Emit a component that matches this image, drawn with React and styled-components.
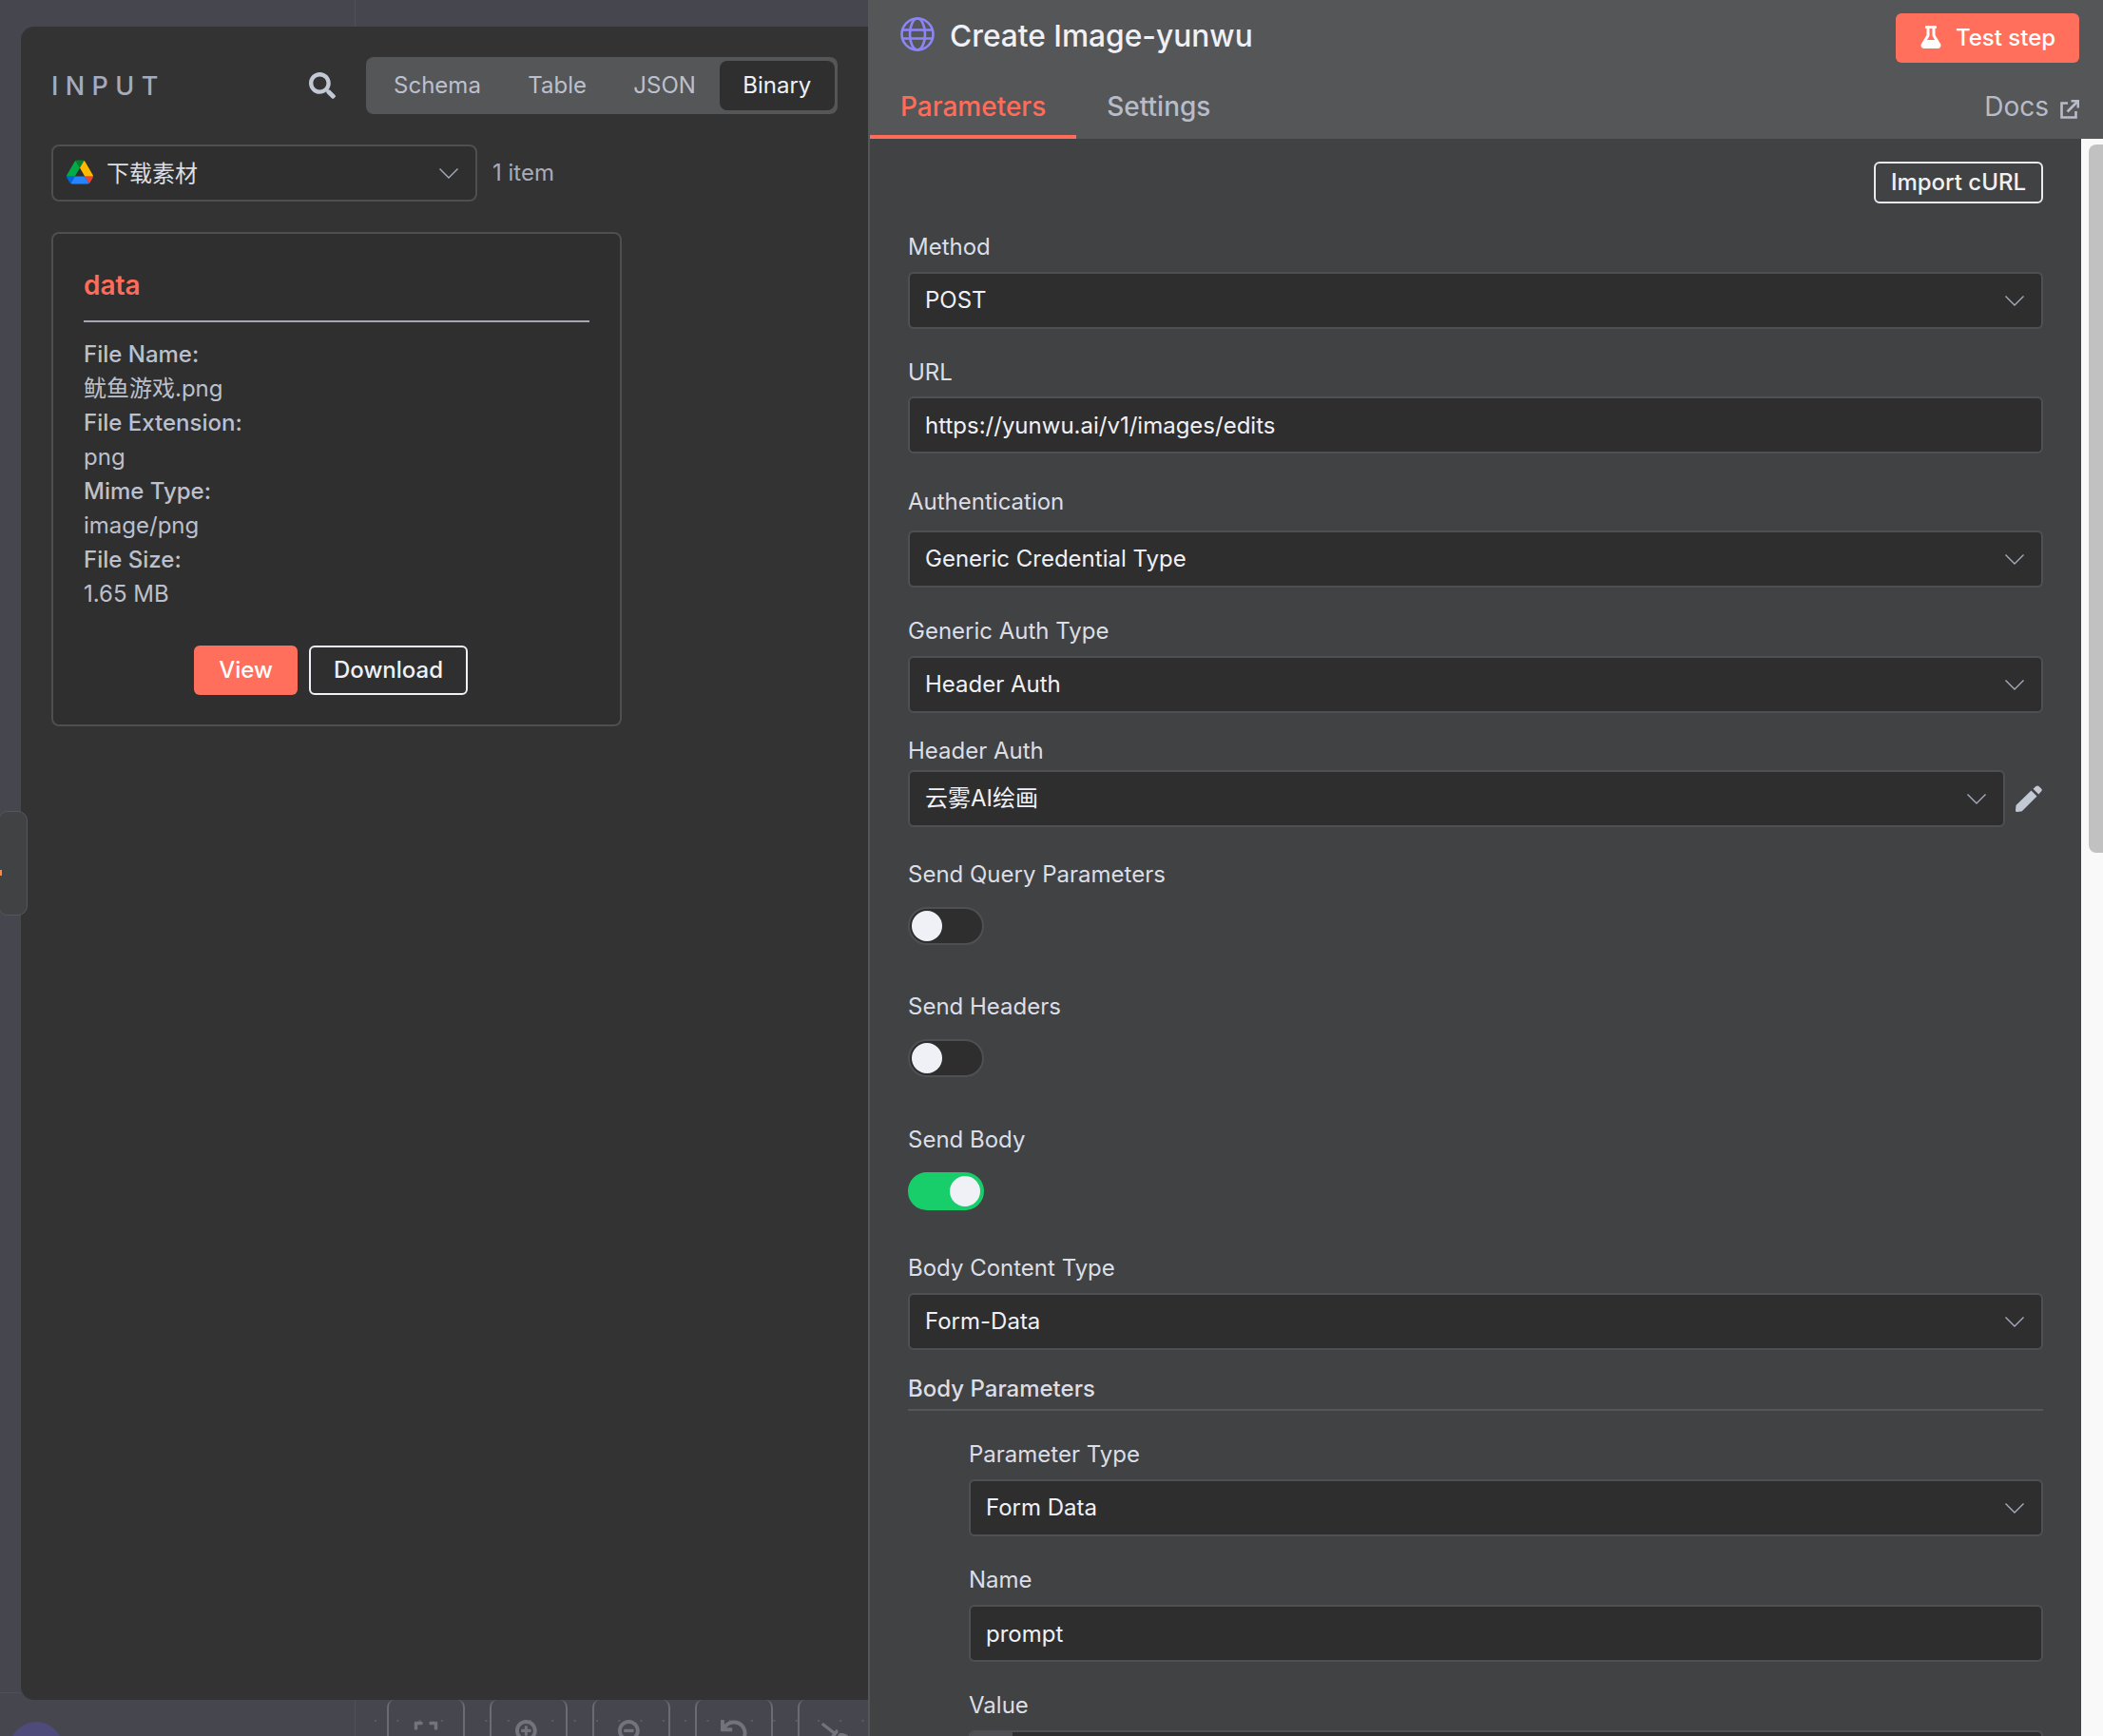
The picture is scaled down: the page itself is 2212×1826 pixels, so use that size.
import styled, { createGlobalStyle } from "styled-components";
import {
  FaSearch,
  FaFlask,
  FaExpand,
  FaSearchPlus,
  FaSearchMinus,
  FaUndo,
  FaBroom,
} from "react-icons/fa";

const GlobalStyle = createGlobalStyle`
  html, body {
    margin: 0;
    padding: 0;
    background: #46464f;
  }
  * {
    box-sizing: border-box;
  }
  body {
    font-family: Inter, "Noto Sans CJK SC", sans-serif;
  }
`;

const Chevron = () => (
  <ChevronSvg viewBox="0 0 20 11">
    <polyline points="0.5,0.5 10,10 19.5,0.5" />
  </ChevronSvg>
);

const Globe = () => (
  <GlobeSvg viewBox="0 0 36 36">
    <circle cx="18" cy="18" r="16.5" />
    <ellipse cx="18" cy="18" rx="8" ry="16.5" />
    <line x1="3" y1="13.5" x2="33" y2="13.5" />
    <line x1="3" y1="22.5" x2="33" y2="22.5" />
  </GlobeSvg>
);

const DriveLogo = () => (
  <DriveSvg viewBox="0 0 87.3 78">
    <path d="m6.6 66.85 3.85 6.65c.8 1.4 1.95 2.5 3.3 3.3l13.75-23.8h-27.5c0 1.55.4 3.1 1.2 4.5z" fill="#0066da" />
    <path d="m43.65 25-13.75-23.8c-1.35.8-2.5 1.9-3.3 3.3l-25.4 44a9.06 9.06 0 0 0 -1.2 4.5h27.5z" fill="#00ac47" />
    <path d="m73.55 76.8c1.35-.8 2.5-1.9 3.3-3.3l1.6-2.75 7.65-13.25c.8-1.4 1.2-2.95 1.2-4.5h-27.502l5.852 11.5z" fill="#ea4335" />
    <path d="m43.65 25 13.75-23.8c-1.35-.8-2.9-1.2-4.5-1.2h-18.5c-1.6 0-3.15.45-4.5 1.2z" fill="#00832d" />
    <path d="m59.8 53h-32.3l-13.75 23.8c1.35.8 2.9 1.2 4.5 1.2h50.8c1.6 0 3.15-.45 4.5-1.2z" fill="#2684fc" />
    <path d="m73.4 26.5-12.7-22c-.8-1.4-1.95-2.5-3.3-3.3l-13.75 23.8 16.15 28h27.45c0-1.55-.4-3.1-1.2-4.5z" fill="#ffba00" />
  </DriveSvg>
);

const ExternalLink = () => (
  <ExternalSvg viewBox="0 0 20 20">
    <path d="M8 3.5H1.5V18.5H16.5V12" />
    <path d="M7.5 12.5L18 2" />
    <path d="M11.5 1.2H18.8V8.5" />
  </ExternalSvg>
);

const Pencil = () => (
  <PencilSvg viewBox="0 0 28 28">
    <path d="M0.5 21L16.5 5.5L22.5 11.5L7 27Q6.5 27.6 5.5 27.6L1.5 28Q0 28 0 26.5Z" />
    <path d="M18.5 3.8L21.5 1Q23 -0.2 24.5 1L27.3 3.7Q28.3 5 27.2 6.3L24.3 9.5Z" />
  </PencilSvg>
);

const Field = ({ label, gap, labelGap, children }) => (
  <FieldWrap $gap={gap}>
    <Label $gap={labelGap}>{label}</Label>
    {children}
  </FieldWrap>
);

const Select = ({ value }) => (
  <SelectBox>
    <SelectValue>{value}</SelectValue>
    <Chevron />
  </SelectBox>
);

const FILE_ROWS = [
  ["File Name:", "鱿鱼游戏.png"],
  ["File Extension:", "png"],
  ["Mime Type:", "image/png"],
  ["File Size:", "1.65 MB"],
];

export default function App() {
  return (
    <>
      <GlobalStyle />
      <Page>
        <Canvas>
          <TopStrip />
          <InputPanel>
            <PanelHead>
              <InputTitle>INPUT</InputTitle>
              <SearchBtn>
                <FaSearch size={28} />
              </SearchBtn>
              <ViewTabs>
                <ViewTab>Schema</ViewTab>
                <ViewTab>Table</ViewTab>
                <ViewTab>JSON</ViewTab>
                <ViewTab $active>Binary</ViewTab>
              </ViewTabs>
            </PanelHead>
            <SourceRow>
              <SourceSelect>
                <DriveLogo />
                <SourceName>下载素材</SourceName>
                <Chevron />
              </SourceSelect>
              <ItemCount>1 item</ItemCount>
            </SourceRow>
            <BinaryCard>
              <CardTitle>data</CardTitle>
              <CardRule />
              {FILE_ROWS.map(([key, val]) => (
                <div key={key}>
                  <FileKey>{key}</FileKey>
                  <FileVal>{val}</FileVal>
                </div>
              ))}
              <CardActions>
                <ViewBtn>View</ViewBtn>
                <DownloadBtn>Download</DownloadBtn>
              </CardActions>
            </BinaryCard>
          </InputPanel>
          <BottomStrip>
            <Avatar />
            <ZoomBar>
              <ZoomBtn><FaExpand size={28} /></ZoomBtn>
              <ZoomBtn><FaSearchPlus size={28} /></ZoomBtn>
              <ZoomBtn><FaSearchMinus size={28} /></ZoomBtn>
              <ZoomBtn><FaUndo size={28} /></ZoomBtn>
              <ZoomBtn $flip><FaBroom size={32} /></ZoomBtn>
            </ZoomBar>
          </BottomStrip>
          <SideHandle>
            <HandleDot />
          </SideHandle>
        </Canvas>

        <NodePanel>
          <NodeHead>
            <TitleRow>
              <Globe />
              <NodeTitle>Create Image-yunwu</NodeTitle>
              <TestBtn>
                <FaFlask size={24} />
                Test step
              </TestBtn>
            </TitleRow>
            <TabRow>
              <NodeTab $active>Parameters</NodeTab>
              <NodeTab>Settings</NodeTab>
              <DocsLink>
                Docs
                <ExternalLink />
              </DocsLink>
            </TabRow>
          </NodeHead>
          <NodeBodyWrap>
            <NodeBody>
              <ImportRow>
                <ImportBtn>Import cURL</ImportBtn>
              </ImportRow>
              <Field label="Method" gap={29}>
                <Select value="POST" />
              </Field>
              <Field label="URL" gap={29} labelGap={8}>
                <TextBox>https://yunwu.ai/v1/images/edits</TextBox>
              </Field>
              <Field label="Authentication" gap={34} labelGap={13}>
                <Select value="Generic Credential Type" />
              </Field>
              <Field label="Generic Auth Type" gap={29}>
                <Select value="Header Auth" />
              </Field>
              <Field label="Header Auth" gap={23} labelGap={3}>
                <CredentialRow>
                  <Select value="云雾AI绘画" />
                  <Pencil />
                </CredentialRow>
              </Field>
              <Field label="Send Query Parameters" gap={33} labelGap={17}>
                <Toggle />
              </Field>
              <Field label="Send Headers" gap={48} labelGap={17}>
                <Toggle />
              </Field>
              <Field label="Send Body" gap={49} labelGap={17}>
                <Toggle $on />
              </Field>
              <Field label="Body Content Type" gap={44} labelGap={9}>
                <Select value="Form-Data" />
              </Field>
              <SectionHead>Body Parameters</SectionHead>
              <Nested>
                <Field label="Parameter Type" gap={29}>
                  <Select value="Form Data" />
                </Field>
                <Field label="Name" gap={29}>
                  <TextBox>prompt</TextBox>
                </Field>
                <Field label="Value" gap={29}>
                  <ExpressionBox>
                    <ExpressionTag />
                  </ExpressionBox>
                </Field>
              </Nested>
            </NodeBody>
            <ScrollTrack>
              <ScrollThumb />
            </ScrollTrack>
          </NodeBodyWrap>
        </NodePanel>
      </Page>
    </>
  );
}

const Page = styled.div`
  width: 2212px;
  height: 1826px;
  display: flex;
  overflow: hidden;
`;

const Canvas = styled.div`
  position: relative;
  width: 913px;
  flex: none;
  display: flex;
  flex-direction: column;
  background:
    linear-gradient(#50505a, #50505a) 373px 0 / 1px 100% no-repeat,
    linear-gradient(#50505a, #50505a) 0 1780px / 22px 1px no-repeat,
    #46464f;
`;

const TopStrip = styled.div`
  height: 28px;
  flex: none;
`;

const InputPanel = styled.section`
  height: 1760px;
  margin-left: 22px;
  padding: 32px 32px 0;
  flex: none;
  background: #333333;
  border-radius: 14px 0 0 14px;
`;

const PanelHead = styled.div`
  display: flex;
  align-items: center;
`;

const InputTitle = styled.h2`
  margin: 0;
  color: #a5abbc;
  font-size: 27px;
  font-weight: 500;
  letter-spacing: 7.4px;
  margin-right: auto;
`;

const SearchBtn = styled.span`
  display: flex;
  color: #c3c8d5;
  margin-right: 32px;
`;

const ViewTabs = styled.div`
  display: flex;
  height: 60px;
  padding: 4px 3px 4px 4px;
  background: #555658;
  border-radius: 8px;
`;

const ViewTab = styled.div`
  display: flex;
  align-items: center;
  padding: 0 24.7px 1px;
  font-size: 24px;
  border-radius: 8px;
  color: ${(p) => (p.$active ? "#f0f1f7" : "#bcc0cd")};
  background: ${(p) => (p.$active ? "#2f2f2f" : "transparent")};
`;

const SourceRow = styled.div`
  display: flex;
  align-items: center;
  margin-top: 32px;
`;

const SourceSelect = styled.div`
  width: 448px;
  height: 60px;
  display: flex;
  align-items: center;
  padding: 0 18px 0 14px;
  background: #2f2f2f;
  border: 2px solid #4f4f4f;
  border-radius: 8px;
`;

const DriveSvg = styled.svg`
  width: 28px;
  height: 26px;
  flex: none;
  margin-bottom: 2px;
`;

const SourceName = styled.span`
  flex: 1;
  margin: 0 0 3px 14px;
  color: #dcdee6;
  font-size: 24px;
`;

const ItemCount = styled.span`
  margin: 0 0 2px 16px;
  color: #a5abbc;
  font-size: 24px;
`;

const BinaryCard = styled.div`
  width: 600px;
  height: 520px;
  margin-top: 32px;
  padding: 36px 32px 0;
  background: #2f2f2f;
  border: 2px solid #4f4f4f;
  border-radius: 8px;
`;

const CardTitle = styled.div`
  color: #ff6d5a;
  font-size: 28px;
  font-weight: 600;
  line-height: 36px;
`;

const CardRule = styled.div`
  height: 2px;
  margin: 19px 0 16px;
  background: #a5a8b4;
`;

const FileKey = styled.div`
  color: #bcc0cd;
  font-size: 24px;
  font-weight: 500;
  line-height: 36px;
`;

const FileVal = styled.div`
  color: #bcc0cd;
  font-size: 24px;
  line-height: 36px;
`;

const CardActions = styled.div`
  display: flex;
  justify-content: center;
  gap: 12px;
  margin-top: 36px;
  padding-right: 12px;
`;

const ViewBtn = styled.button`
  height: 52px;
  width: 109px;
  padding: 0 0 2px;
  color: #ffffff;
  font: 500 24px Inter, sans-serif;
  background: #ff6f5c;
  border: none;
  border-radius: 6px;
`;

const DownloadBtn = styled.button`
  height: 52px;
  width: 167px;
  padding: 0 0 2px;
  color: #f0f1f7;
  font: 500 24px Inter, sans-serif;
  background: transparent;
  border: 2px solid #f0f1f7;
  border-radius: 6px;
`;

const BottomStrip = styled.div`
  flex: 1;
  display: flex;
  align-items: stretch;
  overflow: hidden;
  padding-left: 10px;
`;

const Avatar = styled.div`
  width: 56px;
  height: 56px;
  margin-top: 23px;
  flex: none;
  border-radius: 50%;
  background: #4e4b7b;
`;

const ZoomBar = styled.div`
  flex: 1;
  display: flex;
  gap: 26px;
  margin-left: 307px;
  padding-left: 34px;
  background: radial-gradient(circle, #5c5c66 1px, transparent 1.2px) 10.35px 10.35px / 23.3px 23.3px;
`;

const ZoomBtn = styled.div`
  width: 82px;
  height: 80px;
  flex: none;
  display: flex;
  justify-content: center;
  padding-top: 21px;
  color: #73737d;
  border: 2px solid #6b6b75;
  border-top: none;
  border-radius: 8px;

  svg {
    transform: ${(p) => (p.$flip ? "scaleX(-1)" : "none")};
  }
`;

const SideHandle = styled.div`
  position: absolute;
  left: -2px;
  top: 853px;
  width: 31px;
  height: 110px;
  background: #414244;
  border: 1.5px solid #55565a;
  border-radius: 10px;
`;

const HandleDot = styled.span`
  position: absolute;
  left: 0;
  top: 61px;
  width: 3px;
  height: 6px;
  background: #ff8a3c;
`;

const NodePanel = styled.section`
  flex: 1;
  min-width: 0;
  display: flex;
  flex-direction: column;
  border-left: 2px solid #55565a;
`;

const NodeHead = styled.header`
  height: 146px;
  flex: none;
  display: flex;
  flex-direction: column;
  background: #555658;
`;

const TitleRow = styled.div`
  display: flex;
  align-items: center;
  height: 80px;
  padding: 0 25px 0 32px;
`;

const GlobeSvg = styled.svg`
  width: 36px;
  height: 36px;
  flex: none;
  margin-top: -8px;
  fill: none;
  stroke: #8c85f5;
  stroke-width: 2.6;
`;

const NodeTitle = styled.h1`
  flex: 1;
  margin: -5px 0 0 16px;
  color: #f0f1f7;
  font-size: 31.7px;
  font-weight: 500;
`;

const TestBtn = styled.button`
  display: flex;
  align-items: center;
  justify-content: center;
  gap: 14px;
  width: 193px;
  height: 52px;
  padding: 0 0 2px;
  color: #ffffff;
  font: 500 24px Inter, sans-serif;
  background: #ff6f5c;
  border: none;
  border-radius: 6px;
`;

const TabRow = styled.div`
  flex: 1;
  display: flex;
  align-items: stretch;
  padding-right: 25px;
  margin-top: -14px;
`;

const NodeTab = styled.div`
  display: flex;
  align-items: center;
  padding: 16px 32px 0;
  margin-right: ${(p) => (p.$active ? "0" : "auto")};
  font-size: 28px;
  font-weight: 500;
  color: ${(p) => (p.$active ? "#ff6d5a" : "#b8bcc9")};
  border-bottom: 4px solid ${(p) => (p.$active ? "#ff6d5a" : "transparent")};
`;

const DocsLink = styled.div`
  display: flex;
  align-items: center;
  gap: 12px;
  padding: 16px 0 4px;
  color: #b8bcc9;
  font-size: 28px;
`;

const ExternalSvg = styled.svg`
  width: 20px;
  height: 20px;
  margin-top: 5px;
  fill: none;
  stroke: #b8bcc9;
  stroke-width: 2.6;
`;

const NodeBodyWrap = styled.div`
  flex: 1;
  min-height: 0;
  display: flex;
`;

const NodeBody = styled.div`
  flex: 1;
  min-width: 0;
  overflow: hidden;
  padding: 24px 40px 0 40px;
  background: #414244;
`;

const ScrollTrack = styled.div`
  width: 23px;
  flex: none;
  padding: 6px 0 0 8px;
  background: #f9f9f9;
`;

const ScrollThumb = styled.div`
  width: 15px;
  height: 745px;
  border-radius: 8px 0 0 8px;
  background: #c1c1c1;
`;

const ImportRow = styled.div`
  display: flex;
  justify-content: flex-end;
`;

const ImportBtn = styled.button`
  width: 178px;
  height: 44px;
  padding: 0 0 2px;
  color: #f0f1f7;
  font: 500 24px Inter, sans-serif;
  background: transparent;
  border: 2px solid #e8e9f0;
  border-radius: 6px;
`;

const FieldWrap = styled.div`
  margin-top: ${(p) => p.$gap}px;
`;

const Label = styled.div`
  color: #dcdee6;
  font-size: 24px;
  line-height: 34px;
  margin-bottom: ${(p) => p.$gap ?? 9}px;
`;

const SelectBox = styled.div`
  flex: 1;
  height: 60px;
  display: flex;
  align-items: center;
  justify-content: space-between;
  padding: 0 18px 0 16px;
  color: #f0f1f7;
  font-size: 24px;
  background: #2e2e2e;
  border: 2px solid #4f5053;
  border-radius: 6px;
`;

const SelectValue = styled.span`
  line-height: 28px;
  margin-bottom: 1px;
`;

const ChevronSvg = styled.svg`
  width: 20px;
  height: 11px;
  flex: none;
  fill: none;
  stroke: #a5abbc;
  stroke-width: 1.4;
`;

const TextBox = styled.div`
  height: 60px;
  display: flex;
  align-items: center;
  padding: 0 16px;
  color: #f0f1f7;
  font-size: 24px;
  background: #2e2e2e;
  border: 2px solid #4f5053;
  border-radius: 6px;
`;

const CredentialRow = styled.div`
  display: flex;
  align-items: center;
`;

const PencilSvg = styled.svg`
  width: 28px;
  height: 28px;
  flex: none;
  margin: 0 1px 0 11px;
  fill: #c3c8d5;
`;

const Toggle = styled.div`
  position: relative;
  width: 80px;
  height: 40px;
  border-radius: 20px;
  background: ${(p) => (p.$on ? "#17ce6a" : "#2e2e2e")};
  border: 2px solid ${(p) => (p.$on ? "#17ce6a" : "#4f5053")};

  &::after {
    content: "";
    position: absolute;
    top: 2px;
    left: ${(p) => (p.$on ? "42px" : "2px")};
    width: 32px;
    height: 32px;
    border-radius: 50%;
    background: #f0f1f7;
  }
`;

const SectionHead = styled.div`
  margin-top: 24px;
  padding-bottom: 4px;
  color: #dcdee6;
  font-size: 24px;
  font-weight: 500;
  line-height: 34px;
  border-bottom: 2px solid #55565a;
`;

const Nested = styled.div`
  padding-left: 64px;
`;

const ExpressionBox = styled.div`
  height: 60px;
  background: #2e2e2e;
  border: 2px solid #4f5053;
  border-radius: 6px;
  overflow: hidden;
`;

const ExpressionTag = styled.div`
  width: 44px;
  height: 100%;
  background: #4f5053;
`;
